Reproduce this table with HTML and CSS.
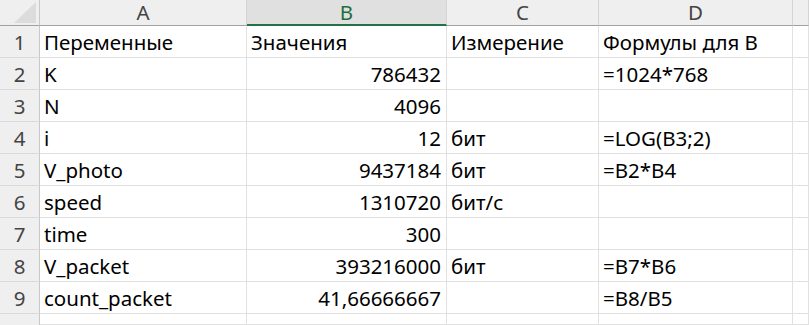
FILE: index.html
```html
<!DOCTYPE html>
<html>

<head>
    <meta charset="UTF-8">
    <title>Лист1</title>
    <link rel="stylesheet" href="styles.css">
</head>

<body>

    <div class="sheet">
        <!-- column headers -->
        <div class="corner"><div class="corner-mark"></div></div>
        <div class="col-head">A</div>
        <div class="col-head selected">B</div>
        <div class="col-head">C</div>
        <div class="col-head">D</div>
        <div class="col-head"></div>

        <div class="row-head">1</div>
        <div class="cell">Переменные</div>
        <div class="cell">Значения</div>
        <div class="cell">Измерение</div>
        <div class="cell">Формулы для B</div>
        <div class="cell"></div>

        <div class="row-head">2</div>
        <div class="cell">K</div>
        <div class="cell num">786432</div>
        <div class="cell"></div>
        <div class="cell">=1024*768</div>
        <div class="cell"></div>

        <div class="row-head">3</div>
        <div class="cell">N</div>
        <div class="cell num">4096</div>
        <div class="cell"></div>
        <div class="cell"></div>
        <div class="cell"></div>

        <div class="row-head">4</div>
        <div class="cell">i</div>
        <div class="cell num">12</div>
        <div class="cell">бит</div>
        <div class="cell">=LOG(B3;2)</div>
        <div class="cell"></div>

        <div class="row-head">5</div>
        <div class="cell">V_photo</div>
        <div class="cell num">9437184</div>
        <div class="cell">бит</div>
        <div class="cell">=B2*B4</div>
        <div class="cell"></div>

        <div class="row-head">6</div>
        <div class="cell">speed</div>
        <div class="cell num">1310720</div>
        <div class="cell">бит/с</div>
        <div class="cell"></div>
        <div class="cell"></div>

        <div class="row-head">7</div>
        <div class="cell">time</div>
        <div class="cell num">300</div>
        <div class="cell"></div>
        <div class="cell"></div>
        <div class="cell"></div>

        <div class="row-head">8</div>
        <div class="cell">V_packet</div>
        <div class="cell num">393216000</div>
        <div class="cell">бит</div>
        <div class="cell">=B7*B6</div>
        <div class="cell"></div>

        <div class="row-head">9</div>
        <div class="cell">count_packet</div>
        <div class="cell num">41,66666667</div>
        <div class="cell"></div>
        <div class="cell">=B8/B5</div>
        <div class="cell"></div>

        <!-- last row, only its top edge is in view -->
        <div class="row-head partial"></div>
        <div class="cell"></div>
        <div class="cell"></div>
        <div class="cell"></div>
        <div class="cell"></div>
        <div class="cell"></div>
    </div>

</body>

</html>
```

FILE: styles.css
```css
* {
    box-sizing: border-box;
    margin: 0;
    padding: 0;
}

html,
body {
    height: 325px;
    overflow: hidden;
}

body {
    font-family: "Noto Sans", sans-serif;
    font-size: 20.5px;
    background: #fff;
    color: #000;
}

.sheet {
    display: grid;
    grid-template-columns: 40px 207px 200px 152px 194px 1fr;
    grid-template-rows: 26px repeat(9, 32px) 11px;
    width: 809px;
    height: 325px;
}

/* header strip */
.corner,
.col-head,
.row-head {
    background: #efefef;
    color: #444;
    line-height: 1.2;
}

.corner {
    display: flex;
    align-items: flex-end;
    justify-content: flex-end;
    padding: 0 3px 2px 0;
    border-right: 1px solid #c8c8c8;
    border-bottom: 1px solid #a0a0a0;
}

.corner-mark {
    width: 22px;
    height: 21px;
    background: #dcdcdc;
    clip-path: polygon(100% 0, 100% 100%, 0 100%);
}

.col-head {
    display: flex;
    align-items: flex-end;
    justify-content: center;
    border-right: 1px solid #d4d4d4;
    border-bottom: 1px solid #a0a0a0;
}

.col-head.selected {
    background: #e0e0e0;
    color: #1e6e42;
    line-height: 1.1;
    border-bottom: 2px solid #217346;
}

.row-head {
    display: flex;
    align-items: flex-end;
    justify-content: center;
    padding-bottom: 2px;
    border-right: 1px solid #c8c8c8;
    border-bottom: 1px solid #dadada;
}

.row-head.partial {
    border-bottom: none;
}

.cell {
    display: flex;
    align-items: flex-end;
    padding: 0 5px 2px 4px;
    line-height: 1.2;
    white-space: nowrap;
    border-right: 1px solid #e1e1e1;
    border-bottom: 1px solid #e1e1e1;
}

.cell.num {
    justify-content: flex-end;
}
```
